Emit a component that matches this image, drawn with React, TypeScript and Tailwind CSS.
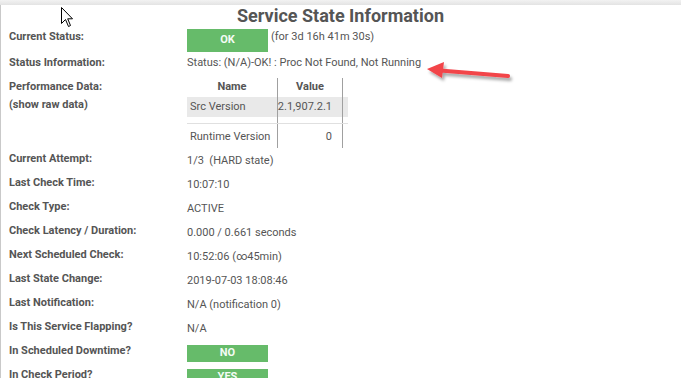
import React from "react";

const font = { fontFamily: "Roboto, 'Liberation Sans', sans-serif" };

function Row({ label, children, boxed }: { label: string; children: React.ReactNode; boxed?: boolean }) {
  return (
    <div className="flex h-[24px]">
      <div className="w-[178px] shrink-0 text-[11px] leading-[14px] font-bold text-[#555]">{label}</div>
      <div className={boxed ? "pt-[1px]" : "pt-[2px] text-[11px] leading-[14px] text-[#555] whitespace-pre"}>{children}</div>
    </div>
  );
}

function GreenBox({ text, h }: { text: string; h: string }) {
  return (
    <div className={`w-[81px] ${h} bg-[#66bb6a] text-[#f4fbf4] text-[11px] font-bold flex items-center justify-center`}>
      {text}
    </div>
  );
}

export default function App() {
  return (
    <div className="w-[681px] h-[378px] overflow-hidden bg-white relative" style={font}>
      <div className="h-[5px] bg-gradient-to-b from-[#f2f2f2] to-[#e3e3e3]" />
      <div className="border-l border-[#c9c9c9] h-[373px] pl-[8px]">
        <div className="h-[24px] text-center text-[18px] leading-[22px] font-bold text-[#555] pr-[9px]">
          Service State Information
        </div>
        {/* Current Status */}
        <div className="flex h-[25px]">
          <div className="w-[178px] shrink-0 pt-[1px] text-[11px] leading-[14px] font-bold text-[#555]">Current Status:</div>
          <div className="flex">
            <div className="w-[81px] h-[23px] bg-[#66bb6a] text-[#f4fbf4] text-[11px] font-bold flex items-center justify-center">OK</div>
            <div className="pl-[3px] pt-[1px] text-[11px] leading-[14px] text-[#555]">(for 3d 16h 41m 30s)</div>
          </div>
        </div>
        {/* Status Information */}
        <div className="flex h-[24px]">
          <div className="w-[178px] shrink-0 pt-[2px] text-[11px] leading-[14px] font-bold text-[#555]">Status Information:</div>
          <div className="pt-[2px] text-[11px] leading-[14px] text-[#555]">Status: (N/A)-OK! : Proc Not Found, Not Running</div>
        </div>
        {/* Performance Data */}
        <div className="flex h-[74px]">
          <div className="w-[178px] shrink-0 text-[11px] leading-[18px] font-bold text-[#555]">
            <div>Performance Data:</div>
            <div>(show raw data)</div>
          </div>
          <div className="text-[11px] text-[#555]">
            <div className="w-[161px] flex flex-col">
              <div className="flex h-[19px] items-center">
                <div className="w-[90px] text-center font-bold">Name</div>
                <div className="w-[65px] h-full border-l border-[#a0a0a0] flex items-center justify-center font-bold">Value</div>
                <div className="w-[6px] h-full border-l border-[#a0a0a0]" />
              </div>
              <div className="flex h-[20px] items-center bg-[#e9e9e9]">
                <div className="w-[90px] pl-[3px]">Src Version</div>
                <div className="w-[65px] h-full border-l border-[#a0a0a0] flex items-center justify-end pr-[10px]">2.1,907.2.1</div>
                <div className="w-[6px] h-full border-l border-[#a0a0a0]" />
              </div>
              <div className="flex h-[6px]">
                <div className="w-[90px]" />
                <div className="w-[65px] h-full border-l border-[#a0a0a0]" />
                <div className="w-[6px] h-full border-l border-[#a0a0a0]" />
              </div>
              <div className="flex h-[25px] items-center border-t border-[#e0e0e0]">
                <div className="w-[90px] pl-[3px] pt-[2px]">Runtime Version</div>
                <div className="w-[65px] h-full border-l border-[#a0a0a0] flex items-center justify-end pr-[10px] pt-[2px]">0</div>
                <div className="w-[6px] h-full border-l border-[#a0a0a0]" />
              </div>
            </div>
          </div>
        </div>
        <Row label="Current Attempt:">1/3  (HARD state)</Row>
        <Row label="Last Check Time:">10:07:10</Row>
        <Row label="Check Type:">ACTIVE</Row>
        <Row label="Check Latency / Duration:">0.000 / 0.661 seconds</Row>
        <Row label="Next Scheduled Check:">10:52:06 (∞45min)</Row>
        <Row label="Last State Change:">2019-07-03 18:08:46</Row>
        <Row label="Last Notification:">N/A (notification 0)</Row>
        <Row label="Is This Service Flapping?">N/A</Row>
        <Row label="In Scheduled Downtime?" boxed>
          <GreenBox text="NO" h="h-[17px]" />
        </Row>
        <Row label="In Check Period?" boxed>
          <GreenBox text="YES" h="h-[17px]" />
        </Row>
      </div>

      {/* red annotation arrow */}
      <svg className="absolute left-[420px] top-[58px]" width="100" height="30" viewBox="0 0 100 30">
        <defs>
          <filter id="sh" x="-20%" y="-50%" width="140%" height="200%">
            <feDropShadow dx="2" dy="3" stdDeviation="1.5" floodColor="#000" floodOpacity="0.35" />
          </filter>
        </defs>
        <g filter="url(#sh)">
          <line x1="20" y1="12.5" x2="88" y2="18" stroke="#f2444a" strokeWidth="4" strokeLinecap="round" />
          <polygon points="7,11 24,4 22,20" fill="#f2444a" />
        </g>
      </svg>

      {/* mouse cursor */}
      <svg className="absolute left-[61px] top-[7px]" width="14" height="21" viewBox="0 0 14 21">
        <path d="M0.5 0.5 L0.5 16.5 L4.5 12.5 L7.5 19.5 L9.5 18.5 L6.7 11.8 L11.5 11.8 Z" fill="#fff" stroke="#000" strokeWidth="1" strokeLinejoin="miter" />
      </svg>
    </div>
  );
}
